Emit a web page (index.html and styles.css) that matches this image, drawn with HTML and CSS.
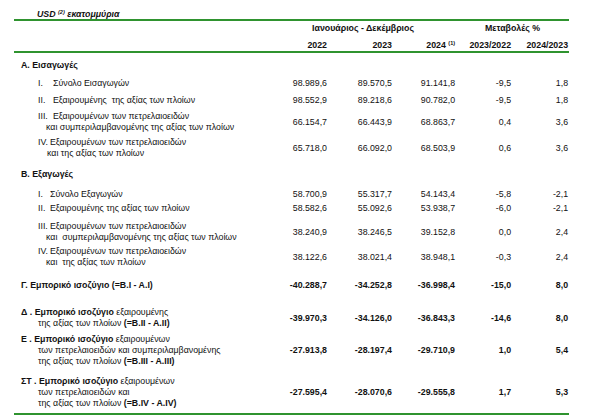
FILE: index.html
```html
<!DOCTYPE html>
<html lang="el">
<head>
<meta charset="utf-8">
<title>Εμπορικό ισοζύγιο</title>
<link rel="stylesheet" href="styles.css">
</head>
<body>
<div class="page">
  <div class="caption">USD <sup>(2)</sup> εκατομμύρια</div>
  <table class="tbl">
    <colgroup>
      <col class="c-label"><col class="c-a"><col class="c-b"><col class="c-c"><col class="c-d"><col class="c-e">
    </colgroup>
    <thead>
      <tr class="hd1"><th></th><th colspan="3" class="ctr">Ιανουάριος - Δεκέμβριος</th><th colspan="2" class="ctr">Μεταβολές %</th></tr>
      <tr class="hd2"><th></th><th>2022</th><th>2023</th><th>2024 <sup>(1)</sup></th><th>2023/2022</th><th>2024/2023</th></tr>
    </thead>
    <tbody>
      <tr class="p7"><td class="lbl sec"><b>Α. Εισαγωγές</b></td><td></td><td></td><td></td><td></td><td></td></tr>
      <tr class="p7"><td class="lbl item"><span class="rn w15">I.</span>Σύνολο Εισαγωγών</td><td>98.989,6</td><td>89.570,5</td><td>91.141,8</td><td>-9,5</td><td>1,8</td></tr>
      <tr class="p6"><td class="lbl item"><span class="rn w15">II.</span>Εξαιρουμένης&nbsp; της αξίας των πλοίων</td><td>98.552,9</td><td>89.218,6</td><td>90.782,0</td><td>-9,5</td><td>1,8</td></tr>
      <tr class="p5"><td class="lbl item"><div><span class="rn w15">III.</span>Εξαιρουμένων των πετρελαιοειδών</div><div class="c8">και συμπεριλαμβανομένης της αξίας των πλοίων</div></td><td>66.154,7</td><td>66.443,9</td><td>68.863,7</td><td>0,4</td><td>3,6</td></tr>
      <tr class="p4"><td class="lbl item"><div><span class="rn w12">IV.</span>Εξαιρουμένων των πετρελαιοειδών</div><div class="c9">και της αξίας των πλοίων</div></td><td>65.718,0</td><td>66.092,0</td><td>68.503,9</td><td>0,6</td><td>3,6</td></tr>

      <tr class="p10"><td class="lbl sec"><b>Β. Εξαγωγές</b></td><td></td><td></td><td></td><td></td><td></td></tr>
      <tr class="p9"><td class="lbl item"><span class="rn w12">I.</span>Σύνολο Εξαγωγών</td><td>58.700,9</td><td>55.317,7</td><td>54.143,4</td><td>-5,8</td><td>-2,1</td></tr>
      <tr class="p3"><td class="lbl item"><span class="rn w12">II.</span>Εξαιρουμένης της αξίας των πλοίων</td><td>58.582,6</td><td>55.092,6</td><td>53.938,7</td><td>-6,0</td><td>-2,1</td></tr>
      <tr class="p7"><td class="lbl item"><div><span class="rn w12">III.</span>Εξαιρουμένων των πετρελαιοειδών</div><div class="c8">και&nbsp; συμπεριλαμβανομένης της αξίας των πλοίων</div></td><td>38.240,9</td><td>38.246,5</td><td>39.152,8</td><td>0,0</td><td>2,4</td></tr>
      <tr class="p3"><td class="lbl item"><div><span class="rn w12">IV.</span>Εξαιρουμένων των πετρελαιοειδών</div><div class="c8">και&nbsp; της αξίας των πλοίων</div></td><td>38.122,6</td><td>38.021,4</td><td>38.948,1</td><td>-0,3</td><td>2,4</td></tr>

      <tr class="p12 tot"><td class="lbl sec"><b>Γ. Εμπορικό ισοζύγιο (=B.I - A.I)</b></td><td>-40.288,7</td><td>-34.252,8</td><td>-36.998,4</td><td>-15,0</td><td>8,0</td></tr>
      <tr class="p16 tot"><td class="lbl sec"><div><b>Δ . Εμπορικό ισοζύγιο</b> εξαιρουμένης</div><div class="c17">της αξίας των πλοίων <b>(=B.II - A.II)</b></div></td><td>-39.970,3</td><td>-34.126,0</td><td>-36.843,3</td><td>-14,6</td><td>8,0</td></tr>
      <tr class="p5 tot"><td class="lbl sec"><div><b>Ε . Εμπορικό ισοζύγιο</b> εξαιρουμένων</div><div class="c17">των πετρελαιοειδών και συμπεριλαμβανομένης</div><div class="c17">της αξίας των πλοίων <b>(=B.III - A.III)</b></div></td><td>-27.913,8</td><td>-28.197,4</td><td>-29.710,9</td><td>1,0</td><td>5,4</td></tr>
      <tr class="p9 tot last"><td class="lbl sec"><div><b>ΣΤ . Εμπορικό ισοζύγιο</b> εξαιρουμένων</div><div class="c17">των πετρελαιοειδών και</div><div class="c17">της αξίας των πλοίων <b>(=B.IV - A.IV)</b></div></td><td>-27.595,4</td><td>-28.070,6</td><td>-29.555,8</td><td>1,7</td><td>5,3</td></tr>
    </tbody>
  </table>
</div>
</body>
</html>
```
FILE: styles.css
```css
* { box-sizing: border-box; }
html, body { margin: 0; padding: 0; background: #fff; }
body {
  font-family: "Liberation Sans", Arial, sans-serif;
  font-size: 8.8px;
  color: #111;
}
.page {
  width: 600px;
  height: 417px;
  padding-left: 14px;
  overflow: hidden;
}
.caption {
  height: 19px;
  padding: 9px 0 0 23px;
  line-height: 10px;
  font-weight: bold;
  font-style: italic;
}
sup {
  font-size: 5.5px;
  line-height: 0;
  vertical-align: 3px;
}
.tbl {
  border-collapse: separate;
  border-spacing: 0;
  table-layout: fixed;
  width: 555px;
}
.c-label { width: 256px; }
.c-a { width: 58px; }
.c-b { width: 65px; }
.c-c { width: 63px; }
.c-d { width: 56px; }
.c-e { width: 57px; }

.tbl th, .tbl td {
  padding: 0 1px 0 0;
  line-height: 11px;
  text-align: right;
  vertical-align: middle;
  font-weight: normal;
  white-space: nowrap;
}
.tbl th { font-weight: bold; }
.tbl th.ctr { text-align: center; padding-right: 0; }
.hd1 th { border-top: 2px solid #2f932f; padding-top: 2px; }
.hd2 th { padding-top: 6px; border-bottom: 2px solid #2f932f; }

.tbl td.lbl { text-align: left; vertical-align: top; padding-right: 0; }
.sec { padding-left: 7px !important; }
.item { padding-left: 24px !important; }
.rn { display: inline-block; }
.w15 { min-width: 15px; }
.w12 { min-width: 12px; }
.c8 { padding-left: 8px; }
.c9 { padding-left: 9px; }
.c17 { padding-left: 17px; }

.tot td { font-weight: bold; }
.tot td.lbl { font-weight: normal; }

.p3 > td { padding-top: 3px; }
.p4 > td { padding-top: 4px; }
.p5 > td { padding-top: 5px; }
.p6 > td { padding-top: 6px; }
.p7 > td { padding-top: 7px; }
.p9 > td { padding-top: 9px; }
.p10 > td { padding-top: 10px; }
.p12 > td { padding-top: 12px; }
.p16 > td { padding-top: 16px; }
.last > td { padding-bottom: 4px; border-bottom: 2px solid #2f932f; }
```
